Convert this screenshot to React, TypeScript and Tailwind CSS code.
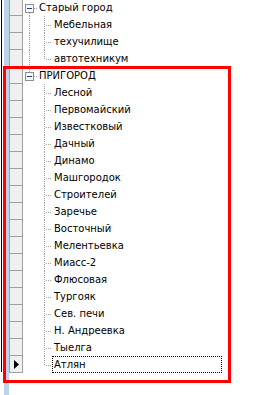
import React from "react";

type Row = {
  label: string;
  root?: boolean;
  last?: boolean; // last child in its group
  parentHasNext?: boolean; // level-0 line passes through this child row
  first?: boolean; // first root row (no line above)
  focused?: boolean;
};

const rows: Row[] = [
  { label: "Старый город", root: true, first: true },
  { label: "Мебельная", parentHasNext: true },
  { label: "техучилище", parentHasNext: true },
  { label: "автотехникум", parentHasNext: true, last: true },
  { label: "ПРИГОРОД", root: true },
  { label: "Лесной" },
  { label: "Первомайский" },
  { label: "Известковый" },
  { label: "Дачный" },
  { label: "Динамо" },
  { label: "Машгородок" },
  { label: "Строителей" },
  { label: "Заречье" },
  { label: "Восточный" },
  { label: "Мелентьевка" },
  { label: "Миасс-2" },
  { label: "Флюсовая" },
  { label: "Тургояк" },
  { label: "Сев. печи" },
  { label: "Н. Андреевка" },
  { label: "Тыелга" },
  { label: "Атлян", last: true, focused: true },
];

const dot = "#a0a0a0";

function Expander() {
  return (
    <g shapeRendering="crispEdges">
      <rect x={2.5} y={5.5} width={8} height={8} fill="#f7f7f7" stroke="#8c8e94" />
      <rect x={4} y={9} width={5} height={1} fill="#1c3f94" />
    </g>
  );
}

function RootLines({ row }: { row: Row }) {
  return (
    <svg width={14} height={17} className="shrink-0">
      {!row.first && (
        <line x1={6.5} y1={0} x2={6.5} y2={5} stroke={dot} strokeDasharray="1 1" />
      )}
      {row.first && (
        <line x1={6.5} y1={14} x2={6.5} y2={17} stroke={dot} strokeDasharray="1 1" />
      )}
      <line x1={11} y1={9.5} x2={14} y2={9.5} stroke={dot} strokeDasharray="1 1" />
      <Expander />
    </svg>
  );
}

function ChildLines({ row }: { row: Row }) {
  return (
    <svg width={29} height={17} className="shrink-0">
      {row.parentHasNext && (
        <line x1={6.5} y1={0} x2={6.5} y2={17} stroke={dot} strokeDasharray="1 1" />
      )}
      <line
        x1={21.5}
        y1={0}
        x2={21.5}
        y2={row.last ? 10 : 17}
        stroke={dot}
        strokeDasharray="1 1"
      />
      <line x1={23} y1={9.5} x2={29} y2={9.5} stroke={dot} strokeDasharray="1 1" />
    </svg>
  );
}

export default function App() {
  return (
    <div
      className="relative w-[266px] h-[395px] bg-white overflow-hidden flex text-[10px] text-black"
      style={{ fontFamily: '"DejaVu Sans", Verdana, sans-serif' }}
    >
      {/* window edge */}
      <div className="w-[1px] shrink-0" />
      <div className="w-[1px] h-[372px] bg-black shrink-0" />
      <div className="w-[2px] shrink-0" />
      <div className="w-[5px] h-full bg-[#bcd3ea] shrink-0" />

      {/* row headers */}
      <div className="w-[14px] shrink-0 -mt-px self-start border-l border-r border-[#a0a0a0]">
        {rows.map((r, i) => (
          <div
            key={i}
            className="h-[17px] bg-[#f0f0f0] border-b border-[#a0a0a0] flex items-center justify-center"
          >
            {r.focused && (
              <svg width={5} height={9} viewBox="0 0 5 9">
                <path d="M0 0 L5 4.5 L0 9 Z" fill="#000" />
              </svg>
            )}
          </div>
        ))}
      </div>

      {/* tree */}
      <div className="flex-1 -mt-px">
        {rows.map((r, i) => (
          <div key={i} className="h-[17px] flex items-stretch">
            {r.root ? <RootLines row={r} /> : <ChildLines row={r} />}
            <div
              className={
                "flex items-center border pl-px pt-px leading-none " +
                (r.focused
                  ? "border-dotted border-black w-[170px]"
                  : "border-transparent")
              }
            >
              {r.label}
            </div>
          </div>
        ))}
      </div>

      {/* red highlight annotation */}
      <div className="absolute left-[3px] top-[66px] w-[228px] h-[317px] border-[3px] border-[#ff0000]" />
    </div>
  );
}
